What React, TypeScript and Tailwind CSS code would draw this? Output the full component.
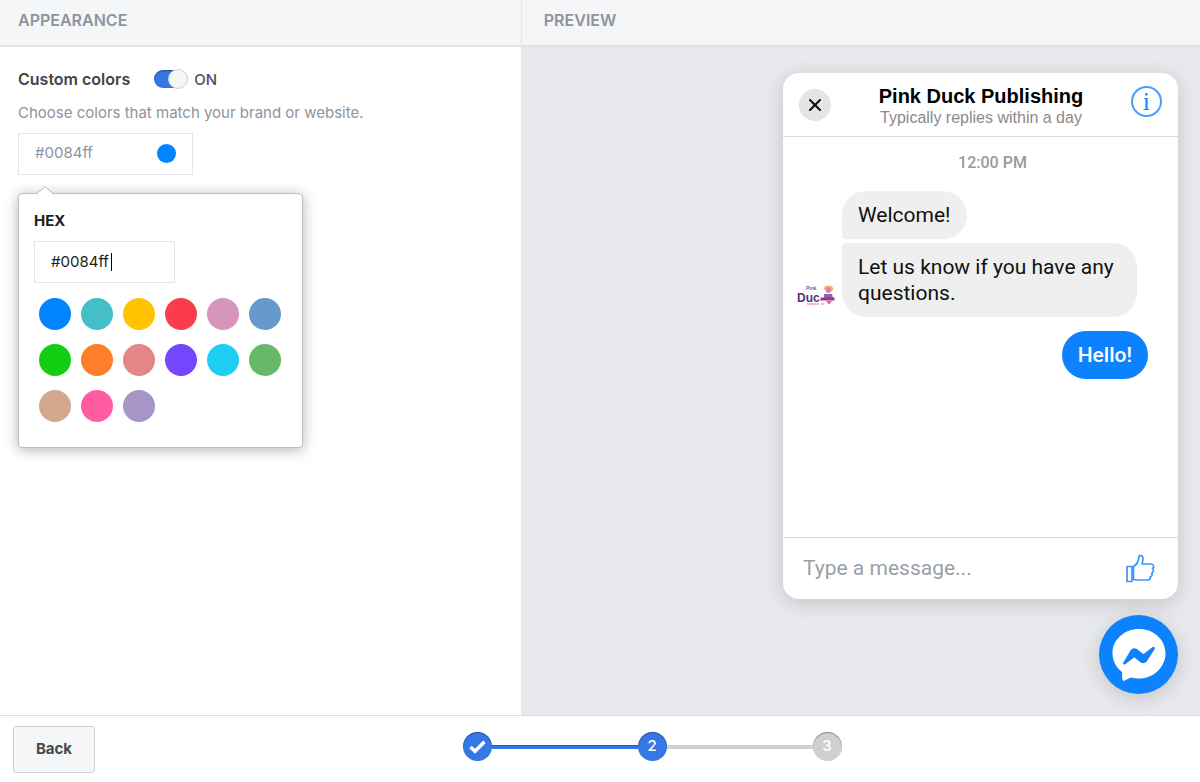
import { useState } from 'react';
import { X } from 'lucide-react';

const swatches = [
  { name: 'Blue', value: '#0084ff' },
  { name: 'Teal', value: '#44bec7' },
  { name: 'Yellow', value: '#ffc300' },
  { name: 'Red', value: '#fa3c4c' },
  { name: 'Mauve', value: '#d696bb' },
  { name: 'Steel blue', value: '#6699cc' },
  { name: 'Green', value: '#13cf13' },
  { name: 'Orange', value: '#ff7e29' },
  { name: 'Coral', value: '#e68585' },
  { name: 'Violet', value: '#7646ff' },
  { name: 'Sky', value: '#20cef5' },
  { name: 'Sage', value: '#67b868' },
  { name: 'Tan', value: '#d4a88c' },
  { name: 'Pink', value: '#ff5ca1' },
  { name: 'Lavender', value: '#a695c7' },
];

function ColorPopover({ color, onChange }: { color: string; onChange: (c: string) => void }) {
  return (
    <div className="absolute left-0 top-[60px] z-10 w-[285px] rounded border border-[#bfbfbf] bg-white px-[15px] pt-[15px] pb-[25px] shadow-[0_2px_14px_rgba(0,0,0,0.3)]">
      <svg className="absolute -top-2 left-[17px]" width="18" height="9" viewBox="0 0 18 9">
        <path d="M0 9 9 0.7 18 9Z" fill="#fff" />
        <path d="M0.5 8 9 0.7 17.5 8" fill="none" stroke="#bfbfbf" />
      </svg>
      <label htmlFor="hex" className="block text-[15px] leading-6 font-bold text-[#1c1e21]">
        HEX
      </label>
      <div className="relative mt-2 w-[141px]">
        <input
          id="hex"
          type="text"
          value={color}
          onChange={(e) => onChange(e.target.value)}
          className="block h-[42px] w-full border border-[#e4e5e8] px-4 text-[15px] text-[#1c1e21] caret-transparent outline-none"
        />
        <span className="absolute left-[77px] top-3 h-[18px] w-px bg-black" />
      </div>
      <div className="mt-[15px] grid grid-cols-[repeat(6,32px)] gap-x-[10px] gap-y-[14px] px-[5px]">
        {swatches.map((s) => (
          <button
            key={s.value}
            type="button"
            aria-label={s.name}
            onClick={() => onChange(s.value)}
            className="size-8 rounded-full"
            style={{ backgroundColor: s.value }}
          />
        ))}
      </div>
    </div>
  );
}

function Appearance({ color, onChange }: { color: string; onChange: (c: string) => void }) {
  const [on, setOn] = useState(true);

  return (
    <section className="flex w-[43.4%] flex-col">
      <h2 className="h-[47px] border-b-2 border-[#e1e2e5] bg-[#f5f6f7] px-[18px] pt-2 text-base leading-6 font-semibold text-[#8d949e]">
        APPEARANCE
      </h2>
      <div className="px-[18px] pt-5">
        <div className="flex items-center">
          <label htmlFor="custom" className="text-base leading-6 font-semibold text-[#444]">
            Custom colors
          </label>
          <span className="relative ml-6 flex h-6 w-[34px] items-center">
            <input
              id="custom"
              type="checkbox"
              role="switch"
              checked={on}
              onChange={() => setOn(!on)}
              className="peer h-[18px] w-8 appearance-none rounded-full bg-gray-300 shadow-[inset_0_1px_2px_rgba(0,0,0,0.4)] checked:bg-[#3578e5]"
            />
            <span className="pointer-events-none absolute left-0 size-5 rounded-full border border-[#ccced2] bg-[#f5f6f7] peer-checked:left-[14px]" />
          </span>
          <span className="ml-[6px] pt-[2px] text-[15px] font-medium text-[#4b4f56]">{on ? 'ON' : 'OFF'}</span>
        </div>
        <p className="mt-[9px] text-[15px] leading-6 text-[#8d949e]">
          Choose colors that match your brand or website.
        </p>
        <div className="relative mt-2">
          <button
            type="button"
            aria-haspopup="dialog"
            className="flex h-[42px] w-[175px] items-center justify-between border border-[#e4e5e8] px-4 text-[15px] text-[#8d949e]"
          >
            {color}
            <span className="size-[19px] rounded-full" style={{ backgroundColor: color }} />
          </button>
          <ColorPopover color={color} onChange={onChange} />
        </div>
      </div>
    </section>
  );
}

function DuckLogo() {
  return (
    <svg className="mb-3 w-[38px] shrink-0" height="20" viewBox="0 0 38 20">
      <text x="9" y="5" fontSize="5" fontWeight="700" fill="#8a5aa8" fontFamily="Liberation Sans, sans-serif">Pink</text>
      <text x="0" y="17" fontSize="12" fontWeight="700" fill="#5b2d83" fontFamily="Liberation Sans, sans-serif">Duc</text>
      <path d="M27 4c0-3 3-4 6-3 3 0 4 3 2 5l-5 1z" fill="#f0a868" />
      <circle cx="31.500" cy="5.500" r="2.500" fill="#e879b8" />
      <path d="M27 9h8l1 4h-9z" fill="#7d6bb5" />
      <path d="M24 12.500h13.500v3H23z" fill="#a8327f" />
      <path d="M29 16h6l-3 3.500z" fill="#e85aa5" />
      <path d="M10 19h12M24 19h3" stroke="#eda4cf" strokeWidth="1.500" />
    </svg>
  );
}

function Chat() {
  return (
    <div className="flex w-[395px] flex-1 flex-col rounded-2xl bg-white font-['Roboto','Liberation_Sans',sans-serif] shadow-[0_4px_20px_rgba(0,0,0,0.16)]">
      <header className="flex h-16 items-center justify-between border-b border-[#dcdcdc] px-4">
        <button type="button" aria-label="Close" className="flex size-8 items-center justify-center rounded-full bg-[#e4e4e5]">
          <X size={20} strokeWidth={2.5} className="text-[#111]" />
        </button>
        <div className="pt-[2px] text-center font-['Liberation_Sans',Arial,sans-serif]">
          <h3 className="text-xl leading-6 font-bold text-black">Pink Duck Publishing</h3>
          <p className="text-base leading-5 text-[#8a8a8a]">Typically replies within a day</p>
        </div>
        <button
          type="button"
          aria-label="Information"
          className="mb-[6px] flex size-[31px] items-center justify-center rounded-full border-2 border-[#4a9dff] font-['Liberation_Serif',serif] text-[26px] leading-none text-[#1484ff]"
        >
          i
        </button>
      </header>

      <div className="flex flex-1 flex-col px-[14px] pt-4 text-[21px] leading-[26px] text-[#111]">
        <p className="pl-6 text-center text-base leading-5 font-medium text-[#9a9a9a]">12:00 PM</p>
        <div className="mt-[18px] flex items-end">
          <DuckLogo />
          <div className="ml-[7px] flex flex-col items-start gap-1">
            <p className="rounded-[24px] rounded-bl-[4px] bg-[#efefef] px-4 py-[11px]">Welcome!</p>
            <p className="w-[295px] rounded-[24px] rounded-tl-[4px] bg-[#efefef] px-4 py-[11px]">
              Let us know if you have any questions.
            </p>
          </div>
        </div>
        <p className="mt-[14px] mr-4 self-end rounded-full bg-[#0d82ff] px-4 py-[11px] font-medium text-white">
          Hello!
        </p>
      </div>

      <footer className="flex h-[62px] items-center border-t border-[#dcdcdc] px-5">
        <input
          type="text"
          aria-label="Message"
          placeholder="Type a message..."
          className="min-w-0 flex-1 text-[21px] outline-none placeholder:text-[#9a9fa8]"
        />
        <button type="button" aria-label="Send a like">
          <svg width="34" height="32" viewBox="0 0 34 32" fill="none" stroke="#3b95ff" strokeWidth="1.700" strokeLinejoin="round">
            <path d="M3 13.500h5v15H3z" />
            <path d="M9.500 13.500c3-2 4.500-4 5-7l.5-3c.3-1.600 3.700-1.400 4 1.500.2 2-.5 4-1 6h9c3 0 3.500 3.500 1.500 4.500 1.500 1.500 1 4-.8 4.500.8 1.500.3 3.500-1.500 4 .5 2-1 3-3 3H14c-2 0-3-.5-4.500-.500z" />
          </svg>
        </button>
      </footer>
    </div>
  );
}

function Preview() {
  return (
    <section className="flex flex-1 flex-col border-l border-[#e4e5e8] bg-[#e8e9ed]">
      <h2 className="h-[47px] border-b-2 border-[#dfe0e3] bg-[#f5f6f7] px-[22px] pt-2 text-base leading-6 font-semibold text-[#8d949e]">
        PREVIEW
      </h2>
      <div className="flex flex-1 flex-col items-end gap-4 px-[22px] pt-[26px] pb-[21px]">
        <Chat />
        <button
          type="button"
          aria-label="Open chat"
          className="flex size-[79px] items-center justify-center rounded-full bg-[#0d82ff] shadow-[0_4px_20px_rgba(0,0,0,0.16)]"
        >
          <svg width="54" height="54" viewBox="0 0 54 54">
            <path
              d="M27 1C12.500 1 0.500 11.500 0.500 25c0 8 3.500 14.500 9.500 19l.3 7c0 1.500 1 2.200 2.300 1.600l6.400-3c2.600.7 5.200 1 8 1C41.500 50.600 53.500 39 53.500 25.500 53.500 11.500 41.500 1 27 1z"
              fill="#fff"
            />
            <path
              d="M11.300 34.500 18.500 22.500c1.500-2.500 4.500-3 6.800-1.300l5.200 4.200c.6.400 1.200.4 1.700 0l8.500-6.300c1.300-.9 2.800.5 2 1.800L35 33c-1.500 2.300-4.200 2.900-6.500 1.200L23 29.900c-.5-.4-1.100-.4-1.600 0l-8.200 6.300c-1.200.8-2.700-.4-1.900-1.700z"
              fill="#0d82ff"
            />
          </svg>
        </button>
      </div>
    </section>
  );
}

function Stepper() {
  const done = 'flex size-[29px] items-center justify-center rounded-full bg-[#3578e5] shadow-[inset_0_1px_1px_rgba(0,0,0,0.35)]';

  return (
    <ol className="flex items-center text-[15px] font-medium text-white">
      <li className={done} aria-label="Step 1, complete">
        <svg width="17" height="14" viewBox="0 0 17 14" fill="none" stroke="#fff" strokeWidth="3.500">
          <path d="M1.500 7 6 11.300 15.500 1.700" />
        </svg>
      </li>
      <li aria-hidden="true" className="h-1 w-[146px] border-t border-[#2357ad] bg-[#3578e5]" />
      <li className={done}>2</li>
      <li aria-hidden="true" className="h-1 w-[146px] bg-[#d0d0d0]" />
      <li className="flex size-[29px] items-center justify-center rounded-full bg-[#d0d0d0] shadow-[inset_0_1px_1px_rgba(0,0,0,0.35)]">
        3
      </li>
    </ol>
  );
}

export default function App() {
  const [color, setColor] = useState('#0084ff');

  return (
    <div className="flex min-h-screen flex-col bg-white font-['Inter','Liberation_Sans',sans-serif]">
      <main className="flex flex-1">
        <Appearance color={color} onChange={setColor} />
        <Preview />
      </main>
      <footer className="flex border-t border-[#dcdde0] px-[13px] pt-[10px] pb-[9px]">
        <button
          type="button"
          className="h-[47px] w-[82px] rounded-[3px] border border-[#ccd0d5] bg-[#f5f6f7] text-[15px] font-bold text-[#444950]"
        >
          Back
        </button>
        <div className="flex flex-1 items-start justify-center pt-[6px] pl-[22px]">
          <Stepper />
        </div>
      </footer>
    </div>
  );
}
